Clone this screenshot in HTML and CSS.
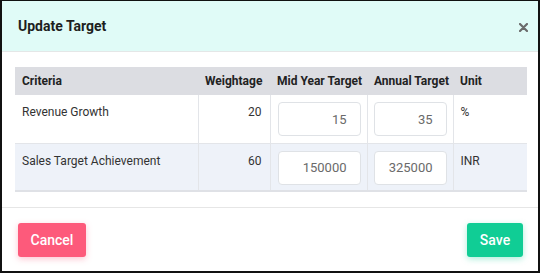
FILE: index.html
```html
<!DOCTYPE html>
<html lang="en">
<head>
    <meta charset="UTF-8">
    <meta name="viewport" content="width=device-width, initial-scale=1.0">
    <title>Update Target</title>
    <link rel="stylesheet" href="styles.css">
</head>
<body>
<div class="modal">
    <div class="modal-header">
        <h2 class="modal-title">Update Target</h2>
        <button class="close-btn" type="button" aria-label="Close">
            <svg width="9" height="9" viewBox="0 0 9 9">
                <path d="M1 1 L8 8 M8 1 L1 8" stroke="#6b6b6b" stroke-width="2.2" stroke-linecap="round"/>
            </svg>
        </button>
    </div>

    <div class="modal-body">
        <table class="target-table">
            <colgroup>
                <col class="col-criteria">
                <col class="col-weight">
                <col class="col-mid">
                <col class="col-annual">
                <col class="col-unit">
            </colgroup>
            <thead>
            <tr>
                <th>Criteria</th>
                <th>Weightage</th>
                <th>Mid Year Target</th>
                <th>Annual Target</th>
                <th>Unit</th>
            </tr>
            </thead>
            <tbody>
            <tr>
                <td>Revenue Growth</td>
                <td class="num">20</td>
                <td class="input-cell"><input class="target-input" type="text" value="15"></td>
                <td class="input-cell"><input class="target-input" type="text" value="35"></td>
                <td>%</td>
            </tr>
            <tr class="alt">
                <td>Sales Target Achievement</td>
                <td class="num">60</td>
                <td class="input-cell"><input class="target-input" type="text" value="150000"></td>
                <td class="input-cell"><input class="target-input" type="text" value="325000"></td>
                <td>INR</td>
            </tr>
            </tbody>
        </table>
    </div>

    <div class="modal-footer">
        <button class="btn btn-cancel" type="button">Cancel</button>
        <button class="btn btn-save" type="button">Save</button>
    </div>
</div>
</body>
</html>
```

FILE: styles.css
```css
* {
    box-sizing: border-box;
}

body {
    margin: 0;
    font-family: Roboto, "Liberation Sans", Arial, sans-serif;
    color: #222;
    background: #fff;
}

.modal {
    width: 540px;
    height: 273px;
    border: 2px solid #111;
    border-top-width: 1px;
    background: #fff;
    display: flex;
    flex-direction: column;
}

.modal-header {
    height: 51px;
    background-color: #e0fbf7;
    border-bottom: 1px solid #e4e7e7;
    display: flex;
    align-items: center;
    justify-content: space-between;
    padding: 0 10px 0 16px;
}
.modal-title {
    margin: 0;
    font-size: 14px;
    font-weight: 700;
    color: #1e1e1e;
}
.close-btn {
    border: 0;
    background: none;
    padding: 0;
    display: flex;
    margin-top: 2px;
}

.modal-body {
    padding: 15px 11px 15px 13px;
    border-bottom: 1px solid #e6e6e6;
}

.target-table {
    width: 512px;
    border-collapse: collapse;
    table-layout: fixed;
    font-size: 12px;
    border-bottom: 2px solid #dfe1e6;
}
.col-criteria { width: 183px; }
.col-weight { width: 72px; }
.col-mid { width: 97px; }
.col-annual { width: 86px; }
.col-unit { width: 74px; }

.target-table th {
    background-color: #dcdde2;
    text-align: left;
    font-weight: 700;
    color: #222;
    height: 28px;
    padding: 0 0 0 7px;
    white-space: nowrap;
}
.target-table td {
    vertical-align: top;
    padding: 10px 7px 0;
    color: #333;
    border-left: 1px solid #e3e5e9;
    height: 48px;
}
.target-table td:first-child {
    border-left: 0;
}
.target-table tbody tr + tr td {
    border-top: 1px solid #e3e5e9;
}
.target-table tr.alt td {
    background-color: #eef2f9;
}
.target-table td.num {
    text-align: right;
    padding-right: 8px;
}
.target-table td.input-cell {
    padding: 7px 6px 0;
}
.target-table td.input-cell:nth-child(3) {
    padding-left: 7px;
}

.target-input {
    width: 100%;
    height: 34px;
    border: 1px solid #dfe2e6;
    border-radius: 4px;
    background: #fff;
    text-align: right;
    padding: 0 13px 0 6px;
    font-family: Roboto, "Liberation Sans", Arial, sans-serif;
    font-size: 13px;
    color: #6a6a6a;
}

.modal-footer {
    flex: 1;
    display: flex;
    justify-content: space-between;
    align-items: center;
    padding: 0 15px 0 16px;
}
.btn {
    height: 34px;
    border: 0;
    border-radius: 3px;
    color: #fff;
    font-family: Roboto, "Liberation Sans", Arial, sans-serif;
    font-size: 14px;
    font-weight: 500;
    padding: 0 10px;
}
.btn-cancel {
    width: 68px;
    background-color: #fd5a7b;
    box-shadow: 0 2px 6px rgba(253, 90, 123, 0.35);
}
.btn-save {
    width: 56px;
    background-color: #10cd95;
    box-shadow: 0 2px 6px rgba(16, 205, 149, 0.35);
}
```
